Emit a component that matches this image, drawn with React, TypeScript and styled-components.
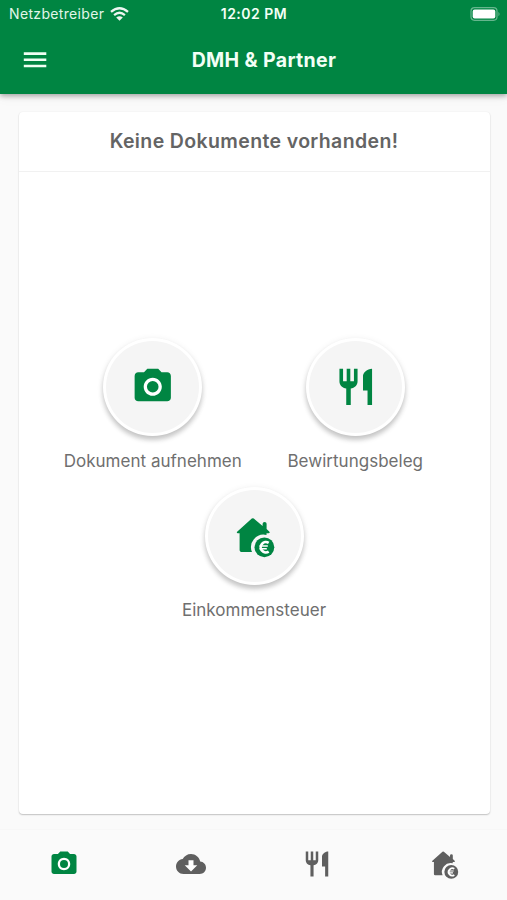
import React from "react";
import styled, { createGlobalStyle } from "styled-components";

const GREEN = "#008542";
const GREY = "#5f5f5f";

const GlobalStyle = createGlobalStyle`
  * { box-sizing: border-box; }
  body { margin: 0; background: #fafafa; font-family: Inter, "Liberation Sans", sans-serif; }
`;

const Screen = styled.div`
  width: 507px;
  height: 900px;
  display: flex;
  flex-direction: column;
  background: #fafafa;
  overflow: hidden;
`;

const Header = styled.header`
  height: 94px;
  flex: none;
  background: ${GREEN};
  color: #f3fff6;
  box-shadow: 0 2px 5px rgba(0, 0, 0, 0.32), 0 3px 12px rgba(0, 0, 0, 0.05);
`;

const StatusBar = styled.div`
  height: 27px;
  display: grid;
  grid-template-columns: 1fr auto 1fr;
  align-items: center;
  padding: 0 6px 0 9px;
`;

const Carrier = styled.div`
  display: flex;
  align-items: center;
  gap: 6px;
  font-size: 14px;
  letter-spacing: 0.34px;
  opacity: 0.93;
`;

const Clock = styled.div`
  font-size: 14px;
  font-weight: 600;
  letter-spacing: 0.5px;
  padding-right: 2px;
`;

const Battery = styled.div`
  display: flex;
  justify-content: flex-end;
`;

const Toolbar = styled.div`
  height: 66px;
  display: grid;
  grid-template-columns: 70px 1fr 50px;
  align-items: center;
`;

const MenuButton = styled.button`
  border: 0;
  padding: 0;
  background: none;
  display: flex;
  justify-content: center;
`;

const Title = styled.h1`
  margin: 0;
  padding-left: 1px;
  text-align: center;
  font-size: 19.5px;
  line-height: 24px;
  font-weight: 700;
  letter-spacing: 0.36px;
`;

const Card = styled.main`
  height: 702px;
  margin: 18px 17.5px 0 18.5px;
  flex: none;
  background: #fff;
  border-radius: 4px;
  box-shadow: 0 1px 1.5px rgba(0, 0, 0, 0.22), 0 0 2px rgba(0, 0, 0, 0.05);
  display: flex;
  flex-direction: column;
`;

const CardTitle = styled.h2`
  margin: 0;
  height: 60px;
  flex: none;
  border-bottom: 1px solid #f1f1f1;
  text-align: center;
  font-size: 19.5px;
  line-height: 58px;
  font-weight: 600;
  letter-spacing: 0.37px;
  color: #646464;
`;

const Actions = styled.div`
  padding-top: 166px;
  display: flex;
  flex-direction: column;
`;

const ActionRow = styled.div`
  height: 149px;
  display: flex;
  justify-content: center;
`;

const Action = styled.div`
  width: 202.5px;
  display: flex;
  flex-direction: column;
  align-items: center;
`;

const RoundButton = styled.button`
  width: 99px;
  height: 98px;
  padding: 0;
  border: 3px solid #fff;
  border-radius: 50%;
  background: #f5f5f5;
  color: ${GREEN};
  display: flex;
  align-items: center;
  justify-content: center;
  box-shadow: 0 4px 5px rgba(0, 0, 0, 0.2), 0 1px 7px rgba(0, 0, 0, 0.07);
`;

const Label = styled.span`
  margin-top: 14px;
  font-size: 17px;
  line-height: 22px;
  letter-spacing: 0.02px;
  color: #6f6f6f;
  white-space: nowrap;
`;

const TabBar = styled.nav`
  margin-top: 15px;
  height: 71px;
  display: grid;
  grid-template-columns: repeat(4, 1fr);
  border-top: 1px solid #f7f7f7;
`;

const Tab = styled.button<{ $active?: boolean }>`
  border: 0;
  padding: 0 0 3px 1px;
  background: none;
  color: ${(p) => (p.$active ? GREEN : GREY)};
  display: flex;
  align-items: center;
  justify-content: center;
`;

const Icon = styled.svg<{ $size: number }>`
  width: ${(p) => p.$size}px;
  height: ${(p) => p.$size}px;
  display: block;
  fill: currentColor;
  overflow: visible;
`;

type IconProps = { size: number };

const CameraIcon = ({ size }: IconProps) => (
  <Icon $size={size} viewBox="0 0 24 24">
    <circle cx="12" cy="12" r="6" fill="#fff" />
    <path d="M9 2 7.17 4H4c-1.1 0-2 .9-2 2v12c0 1.1.9 2 2 2h16c1.1 0 2-.9 2-2V6c0-1.1-.9-2-2-2h-3.17L15 2zm3 15c-2.76 0-5-2.24-5-5s2.24-5 5-5 5 2.24 5 5-2.24 5-5 5z" />
    <circle cx="12" cy="12" r="3.2" />
  </Icon>
);

const RestaurantIcon = ({ size }: IconProps) => (
  <Icon $size={size} viewBox="0 0 24 24">
    <path d="M11 9H9V2H7v7H5V2H3v7c0 2.12 1.66 3.84 3.75 3.97V22h2.5v-9.03C11.34 12.84 13 11.12 13 9V2h-2zM16 6v8h2.5v8H21V2c-2.76 0-5 2.24-5 4z" />
  </Icon>
);

const CloudIcon = ({ size }: IconProps) => (
  <Icon $size={size} viewBox="0 0 24 24">
    <path d="M7 9h10v9H7z" fill="#fff" />
    <path d="M19.35 10.04C18.67 6.59 15.64 4 12 4 9.11 4 6.6 5.64 5.35 8.04 2.34 8.36 0 10.91 0 14c0 3.31 2.69 6 6 6h13c2.76 0 5-2.24 5-5 0-2.64-2.05-4.78-4.65-4.96zM17 13l-5 5-5-5h3V9h4v4z" />
  </Icon>
);

const HouseEuroIcon = ({ size }: IconProps) => (
  <Icon $size={size} viewBox="-2 -2 40 40">
    <path d="M15.8.6Q16.800-.2 17.800.6L26.600 8V5.8Q26.600 4.100 28.600 4.100T30.600 5.800V11L33.200 13.400Q34.500 15 32.500 15.200H30.500V17A12.600 12.600 0 0 0 16 34.100H5.400Q3.600 34.100 3.600 32.300V15.200H1.800Q0 14.900 1.400 13.400Z" />
    <circle cx="28.400" cy="29.300" r="9.900" />
    <path
      d="M32.700 24.900A5.200 5.200 0 1 0 32.700 33.700"
      fill="none"
      stroke="#fff"
      strokeWidth="2.6"
    />
    <path d="M23.500 27.200H31.800V28.800H23.500zM23.500 29.900H30.800V31.500H23.500z" fill="#fff" />
  </Icon>
);

const WifiIcon = () => (
  <svg width="19" height="14" viewBox="0 0 19 14" fill="none" stroke="#fff" strokeWidth="2.3">
    <path d="M1 4.9Q9.5-2.4 18 4.9M4.1 8.1Q9.5 3.5 14.9 8.1" />
    <path d="M6.2 10.5Q9.5 7.8 12.8 10.5L9.5 13.8Z" fill="#fff" stroke="none" />
  </svg>
);

const BatteryIcon = () => (
  <svg width="31" height="14" viewBox="0 0 31 14">
    <rect x="1" y=".7" width="26" height="12.6" rx="3.5" fill="none" stroke="#fff" strokeOpacity=".4" strokeWidth="1.2" />
    <rect x="2.7" y="2.4" width="22.6" height="9.2" rx="2" fill="#fff" />
    <path d="M28.5 4.7Q30.5 7 28.5 9.3Z" fill="#fff" fillOpacity=".45" />
  </svg>
);

const MenuIcon = () => (
  <svg width="24" height="16" viewBox="0 0 24 16" fill="#effff3">
    <path d="M.8.3h22.5v2.6H.8zM.8 6.5h22.5v2.6H.8zM.8 12.7h22.5v2.6H.8z" />
  </svg>
);

export default function App() {
  return (
    <>
      <GlobalStyle />
      <Screen>
        <Header>
          <StatusBar>
            <Carrier>
              Netzbetreiber
              <WifiIcon />
            </Carrier>
            <Clock>12:02 PM</Clock>
            <Battery>
              <BatteryIcon />
            </Battery>
          </StatusBar>
          <Toolbar>
            <MenuButton aria-label="Menu">
              <MenuIcon />
            </MenuButton>
            <Title>DMH &amp; Partner</Title>
          </Toolbar>
        </Header>
        <Card>
          <CardTitle>Keine Dokumente vorhanden!</CardTitle>
          <Actions>
            <ActionRow>
              <Action>
                <RoundButton>
                  <CameraIcon size={43.5} />
                </RoundButton>
                <Label>Dokument aufnehmen</Label>
              </Action>
              <Action>
                <RoundButton>
                  <RestaurantIcon size={43.5} />
                </RoundButton>
                <Label>Bewirtungsbeleg</Label>
              </Action>
            </ActionRow>
            <ActionRow>
              <Action>
                <RoundButton>
                  <HouseEuroIcon size={40} />
                </RoundButton>
                <Label>Einkommensteuer</Label>
              </Action>
            </ActionRow>
          </Actions>
        </Card>
        <TabBar>
          <Tab $active aria-label="Camera">
            <CameraIcon size={30} />
          </Tab>
          <Tab aria-label="Upload">
            <CloudIcon size={30} />
          </Tab>
          <Tab aria-label="Restaurant">
            <RestaurantIcon size={30} />
          </Tab>
          <Tab aria-label="Home">
            <HouseEuroIcon size={28} />
          </Tab>
        </TabBar>
      </Screen>
    </>
  );
}
